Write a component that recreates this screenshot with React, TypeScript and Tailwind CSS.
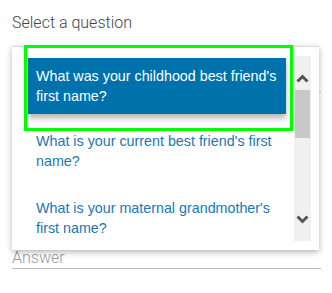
import React from "react";

const roboto = { fontFamily: "Roboto, 'Liberation Sans', sans-serif" };
const arial = { fontFamily: "'Liberation Sans', Arial, sans-serif" };

function Chevron({ up }: { up?: boolean }) {
  return (
    <svg width="13" height="9" viewBox="0 0 13 9">
      <polyline
        points={up ? "1.5,7.5 6.5,2.5 11.5,7.5" : "1.5,1.5 6.5,6.5 11.5,1.5"}
        fill="none"
        stroke="#555"
        strokeWidth="3"
      />
    </svg>
  );
}

export default function App() {
  return (
    <div className="w-[332px] h-[293px] bg-white relative overflow-hidden">
      <div className="pl-3 pt-[11px] text-[16px] leading-6 font-light text-[#444]" style={roboto}>
        Select a question
      </div>
      <div className="relative ml-3 w-[309px] h-[57px] border-b border-[#cfcfcf]">
        <div className="absolute left-0 top-[11px] w-[307px] h-[204px] bg-white border-t border-[#dcdcdc] shadow-[0_2px_6px_rgba(0,0,0,0.3)] flex pt-[9px] z-10">
          <div className="w-[282px] h-[185px] overflow-hidden text-[14.3px] leading-5" style={arial}>
            <div className="pt-[2px] pl-4">
              <div className="w-[258px] px-2 py-2 bg-[#0072ab] text-white shadow-[0_4px_6px_rgba(0,0,0,0.3)]">
                <div className="w-[244px]">What was your childhood best friend's first name?</div>
              </div>
            </div>
            <div className="pl-6 pt-[17px] text-[#1a78b0]">
              <div className="w-[244px]">What is your current best friend's first name?</div>
            </div>
            <div className="pl-6 pt-[27px] text-[#1a78b0]">
              <div className="w-[244px]">What is your maternal grandmother's first name?</div>
            </div>
          </div>
          <div className="w-[17px] h-[185px] bg-[#f0f0f0] flex flex-col">
            <div className="h-[34px] flex items-end justify-center pb-[7px]">
              <Chevron up />
            </div>
            <div className="h-[48px] mx-[1px] bg-[#c8c8c8]" />
            <div className="flex-1" />
            <div className="h-[34px] flex items-start justify-center pt-[8px]">
              <Chevron />
            </div>
          </div>
          <div className="absolute left-3 top-[-2px] w-[269px] h-[86px] border-[3px] border-[#00ff00]" />
        </div>
      </div>
      <div
        className="ml-3 mt-[152px] w-[309px] h-[25px] pt-[2px] border-b border-[#bdbdbd] text-[16px] leading-6 font-light text-[#9a9a9a]"
        style={roboto}
      >
        Answer
      </div>
    </div>
  );
}
